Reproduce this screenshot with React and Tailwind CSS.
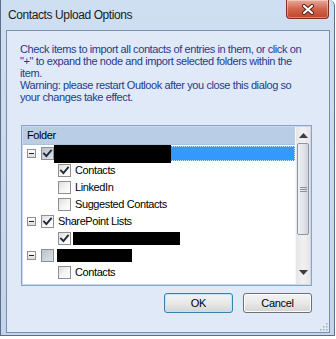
import React from 'react';

const CheckMark = () => (
  <svg width="11" height="11" viewBox="0 0 11 11" className="block">
    <path d="M2 5.6 L4.4 8 L9 2.6" fill="none" stroke="#1f2937" strokeWidth="1.9" strokeLinecap="square" />
  </svg>
);

const Checkbox = ({ checked, dim }) => (
  <div
    className={`w-[13px] h-[13px] shrink-0 border border-[#8e8f8f] ${
      dim ? 'bg-gradient-to-br from-[#b9c2cc] to-[#dde2e8]' : 'bg-gradient-to-br from-[#dcdcdc] via-[#f4f4f4] to-white'
    }`}
  >
    {checked && <CheckMark />}
  </div>
);

const Expander = () => (
  <div className="w-[9px] h-[9px] shrink-0 border border-[#8f8f8f] bg-gradient-to-b from-white to-[#dcdcdc] flex items-center justify-center">
    <div className="w-[5px] h-px bg-[#222]" />
  </div>
);

const Redact = ({ w, h }) => <div className="bg-black shrink-0" style={{ width: w, height: h }} />;

const Row = ({ children }) => <div className="h-[17px] flex items-center">{children}</div>;

const Btn = ({ label, primary }) => (
  <button
    className={`w-[69px] h-[20px] rounded-[3px] border text-[11px] tracking-[-0.3px] text-black bg-gradient-to-b from-[#f3f3f3] via-[#e9e9e9] to-[#d4d4d4] ${
      primary ? 'border-[#3c7fb1] shadow-[inset_0_0_0_1px_#bfe3f7]' : 'border-[#707070] shadow-[inset_0_0_0_1px_#fcfcfc]'
    }`}
  >
    {label}
  </button>
);

const Arrow = ({ up }) => (
  <svg width="9" height="5" viewBox="0 0 9 5" className="block">
    <path d={up ? 'M0 5 L4.5 0 L9 5 Z' : 'M0 0 L4.5 5 L9 0 Z'} fill="#3c3c46" />
  </svg>
);

export default function App() {
  return (
    <div className="w-[336px] h-[339px] bg-white overflow-hidden font-['Liberation_Sans',sans-serif]">
      <div className="w-[335px] h-[336px] bg-gradient-to-b from-[#cfdff2] to-[#c3d5ec] border-x border-b border-[#5d6f88] rounded-tr-[6px] flex flex-col">
        {/* title bar */}
        <div className="h-[30px] flex justify-between items-start">
          <div className="pl-[7px] pt-[7px] text-[12px] leading-[16px] tracking-[-0.4px] text-[#1b1b1b]">
            Contacts Upload Options
          </div>
          <div className="mr-[5px] w-[43px] h-[19px] rounded-b-[4px] border border-t-0 border-[#7a3224] bg-gradient-to-b from-[#e9a99a] via-[#d2654c] to-[#c0442a] shadow-[inset_0_0_0_1px_rgba(255,255,255,0.35)] flex items-center justify-center">
            <svg width="14" height="11" viewBox="0 0 14 11" className="block">
              <path d="M3 2 L11 9 M11 2 L3 9" stroke="#4a2018" strokeWidth="4" strokeLinecap="round" />
              <path d="M3 2 L11 9 M11 2 L3 9" stroke="#fff" strokeWidth="2.2" strokeLinecap="round" />
            </svg>
          </div>
        </div>

        {/* client area */}
        <div className="ml-[5px] w-[324px] h-[303px] border border-[#7b8ea9] bg-[#dfe9f7] flex flex-col">
          <div className="pl-[13px] pt-[12px] text-[11px] leading-[12px] tracking-[-0.4px] text-[#1f3b8e] whitespace-nowrap">
            <div>Check items to import all contacts of entries in them, or click on</div>
            <div>"+" to expand the node and import selected folders within the</div>
            <div>item.</div>
            <div>Warning: please restart Outlook after you close this dialog so</div>
            <div>your changes take effect.</div>
          </div>

          {/* tree list */}
          <div className="ml-[14px] mt-[22px] w-[291px] h-[161px] border border-[#8ba4c6] shadow-[inset_0_0_0_1px_#c9d8ec] p-px flex bg-white">
            <div className="flex-1 flex flex-col text-[11px] tracking-[-0.4px] text-black">
              <div className="h-[18px] bg-[#b9cde6] border-b border-[#a9c0de] pl-[4px] flex items-center">Folder</div>
              <Row>
                <div className="pl-[4px] flex items-center w-full">
                  <Expander />
                  <div className="ml-[5px]"><Checkbox checked dim /></div>
                  <div className="flex-1 h-[15px] bg-[#3399ff] border border-dotted border-[#cfe6ff] flex items-center">
                    <div className="-ml-px">
                      <Redact w={117} h={18} />
                    </div>
                  </div>
                </div>
              </Row>
              <Row>
                <div className="pl-[35px] flex items-center gap-[4px]">
                  <Checkbox checked />
                  <span>Contacts</span>
                </div>
              </Row>
              <Row>
                <div className="pl-[35px] flex items-center gap-[4px]">
                  <Checkbox />
                  <span>LinkedIn</span>
                </div>
              </Row>
              <Row>
                <div className="pl-[35px] flex items-center gap-[4px]">
                  <Checkbox />
                  <span>Suggested Contacts</span>
                </div>
              </Row>
              <Row>
                <div className="pl-[4px] flex items-center">
                  <Expander />
                  <div className="ml-[5px]"><Checkbox checked /></div>
                  <span className="ml-[4px]">SharePoint Lists</span>
                </div>
              </Row>
              <Row>
                <div className="pl-[35px] flex items-center gap-[2px]">
                  <Checkbox checked />
                  <Redact w={107} h={13} />
                </div>
              </Row>
              <Row>
                <div className="pl-[4px] flex items-center">
                  <Expander />
                  <div className="ml-[5px]"><Checkbox dim /></div>
                  <div className="ml-[3px]"><Redact w={75} h={13} /></div>
                </div>
              </Row>
              <Row>
                <div className="pl-[35px] flex items-center gap-[4px]">
                  <Checkbox />
                  <span>Contacts</span>
                </div>
              </Row>
            </div>

            {/* scrollbar */}
            <div className="w-[15px] flex flex-col bg-gradient-to-r from-[#e6e6e8] via-[#f1f1f2] to-[#e6e6e8] border-l border-[#f7f7f7]">
              <div className="h-[16px] flex items-center justify-center"><Arrow up /></div>
              <div className="mx-px h-[92px] rounded-[2px] border border-[#8c95a6] bg-gradient-to-r from-[#eef0f3] via-[#e2e5ea] to-[#cfd3da] flex flex-col items-center justify-center gap-px">
                <div className="w-[7px] h-px bg-[#8a8f99]" />
                <div className="w-[7px] h-px bg-[#8a8f99]" />
                <div className="w-[7px] h-px bg-[#8a8f99]" />
              </div>
              <div className="flex-1" />
              <div className="h-[16px] flex items-center justify-center mb-[4px]"><Arrow /></div>
            </div>
          </div>

          {/* buttons */}
          <div className="mt-[7px] pr-[17px] flex justify-end gap-[10px]">
            <Btn label="OK" primary />
            <Btn label="Cancel" />
          </div>

          <div className="mt-auto mb-[1px] mr-[1px] flex justify-end">
            <svg width="9" height="9" viewBox="0 0 9 9" className="block">
              <g fill="#a3adb9">
                <rect x="7" y="1" width="1.5" height="1.5" />
                <rect x="4" y="4" width="1.5" height="1.5" />
                <rect x="7" y="4" width="1.5" height="1.5" />
                <rect x="1" y="7" width="1.5" height="1.5" />
                <rect x="4" y="7" width="1.5" height="1.5" />
                <rect x="7" y="7" width="1.5" height="1.5" />
              </g>
            </svg>
          </div>
        </div>
      </div>
    </div>
  );
}
